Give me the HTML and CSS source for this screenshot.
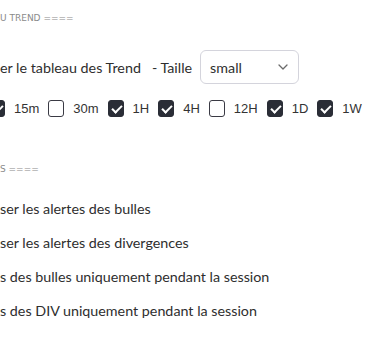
FILE: index.html
```html
<!DOCTYPE html>
<html lang="fr">
<head>
<meta charset="utf-8">
<link rel="stylesheet" href="styles.css">
</head>
<body>
<div class="panel">
  <div class="section-title">U TREND ====</div>
  <div class="row trend-row">
    <span class="label">er le tableau des Trend</span>
    <span class="label dash">- Taille</span>
    <div class="select">
      <span>small</span>
      <svg class="chev" width="10" height="6" viewBox="0 0 10 6"><path d="M1 1l4 4 4-4" fill="none" stroke="#6b6b6b" stroke-width="1.3" stroke-linecap="round" stroke-linejoin="round"/></svg>
    </div>
  </div>
  <div class="row tf-row">
    <span class="cb on"></span><span class="tf">15m</span>
    <span class="cb"></span><span class="tf">30m</span>
    <span class="cb on"></span><span class="tf">1H</span>
    <span class="cb on"></span><span class="tf">4H</span>
    <span class="cb"></span><span class="tf">12H</span>
    <span class="cb on"></span><span class="tf">1D</span>
    <span class="cb on"></span><span class="tf">1W</span>
  </div>
  <div class="section-title second">S ====</div>
  <div class="row line"><span class="label">ser les alertes des bulles</span></div>
  <div class="row line"><span class="label">ser les alertes des divergences</span></div>
  <div class="row line"><span class="label">s des bulles uniquement pendant la session</span></div>
  <div class="row line"><span class="label">s des DIV uniquement pendant la session</span></div>
</div>
</body>
</html>
```
FILE: styles.css
```css
html, body { margin: 0; padding: 0; background: #fff; }
body { width: 375px; height: 338px; overflow: hidden; }
.panel { padding-top: 12px; }
.section-title { font-family: "DejaVu Sans", sans-serif; font-size: 9px; color: #8a8a8a; height: 12px; line-height: 12px; white-space: nowrap; }
.section-title.second { margin-top: 46px; }
.row { display: flex; align-items: center; }
.label { font-family: Lato, "Open Sans", sans-serif; font-size: 14.3px; color: #2e2e2e; white-space: nowrap; }
.trend-row { margin-top: 26px; height: 34px; }
.dash { margin-left: 11px; }
.select { margin-left: 8px; width: 99px; height: 34px; box-sizing: border-box; border: 1px solid #d4d4dc; border-radius: 6px; display: flex; align-items: center; justify-content: space-between; padding: 0 10px 0 9px; font-family: Lato, "Open Sans", sans-serif; font-size: 14.3px; color: #2e2e2e; }
.tf-row { margin-top: 16px; height: 17px; margin-left: -11px; }
.cb { width: 16px; height: 17px; box-sizing: border-box; border: 1px solid #3a3a44; border-radius: 3px; background: #fff; flex: none; position: relative; }
.cb.on { background: #2a2d36; border-color: #2a2d36; }
.cb.on::after { content: ""; position: absolute; left: 5px; top: 2px; width: 4px; height: 8px; border: solid #fff; border-width: 0 2px 2px 0; transform: rotate(45deg); }
.tf { font-family: "Liberation Sans", Arial, sans-serif; font-size: 13px; color: #333; margin-left: 9px; margin-right: 9px; }
.line { height: 34px; }
.section-title + .line { margin-top: 16px; }
```
